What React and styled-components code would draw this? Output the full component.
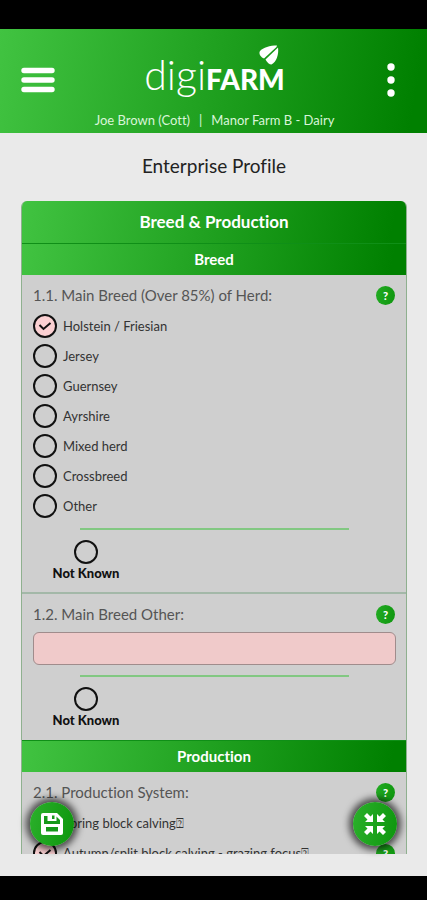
import React, { useState } from 'react';
import styled, { createGlobalStyle } from 'styled-components';

const green = 'linear-gradient(100deg, #41c341 0%, #008000 96%)';

const GlobalStyle = createGlobalStyle`
  * {
    box-sizing: border-box;
  }
  body {
    margin: 0;
    background: #000;
    font-family: Lato, "DejaVu Sans", sans-serif;
    font-variant-ligatures: none;
  }
  button, input {
    font-family: inherit;
  }
`;

const Screen = styled.div`
  display: flex;
  flex-direction: column;
  height: 100vh;
  padding: 29px 0 24px;
  background: #000;
`;

const Header = styled.header`
  flex: none;
  display: grid;
  grid-template-columns: 40px 1fr 40px;
  align-items: center;
  height: 104px;
  padding: 0 16px 2px 18px;
  background: ${green};
  color: #fff;
`;

const IconButton = styled.button`
  display: grid;
  place-items: center;
  height: 40px;
  padding: 0;
  border: 0;
  background: none;
  color: #fff;
`;

const Brand = styled.div`
  display: flex;
  flex-direction: column;
  align-items: center;
  padding-top: 10px;
`;

const Logo = styled.div`
  position: relative;
  display: flex;
  align-items: baseline;
  height: 64px;
  line-height: 64px;
`;

const LogoLight = styled.span`
  font-size: 41px;
  font-weight: 300;
`;

const LogoBold = styled.span`
  font-size: 28px;
  font-weight: 900;
`;

const Leaf = styled.svg`
  position: absolute;
  top: 2px;
  right: 6px;
`;

const UserLine = styled.div`
  display: flex;
  gap: 9px;
  font-size: 13px;
  line-height: 16px;
  margin-top: 5px;
  color: #d9f5d9;
  white-space: nowrap;
`;

const Main = styled.main`
  position: relative;
  flex: 1;
  min-height: 0;
  display: flex;
  flex-direction: column;
  padding: 0 20px 22px 21px;
  background: #eaeaea;
`;

const PageTitle = styled.h1`
  flex: none;
  margin: 0;
  padding: 21px 0 23px;
  font-size: 19px;
  font-weight: 400;
  line-height: 24px;
  text-align: center;
  color: #222;
`;

const Scroller = styled.div`
  flex: 1;
  min-height: 0;
  overflow-y: auto;
  scrollbar-width: none;
`;

const Card = styled.div`
  border: 1px solid #8fb08f;
  border-top: 0;
  border-radius: 6px 6px 0 0;
  overflow: hidden;
  background: #cfcfcf;
`;

const CardTitle = styled.h2`
  margin: 0;
  font-size: 17px;
  font-weight: 700;
  line-height: 42px;
  text-align: center;
  color: #fff;
  background: ${green};
`;

const SectionTitle = styled.h3`
  margin: 0;
  border-top: 1px solid #0f8f17;
  font-size: 15px;
  font-weight: 700;
  line-height: 31px;
  text-align: center;
  color: #fff;
  background: ${green};
`;

const Question = styled.section`
  padding: 10px 10px 11px 11px;

  & + & {
    padding-bottom: 12px;
    border-top: 2px solid #a3b8a8;
  }
`;

const QuestionHead = styled.div`
  display: flex;
  align-items: center;
  justify-content: space-between;
  height: 20px;
  margin-bottom: 6px;
  padding-right: 1px;
  font-size: 15px;
  color: #555;
`;

const Help = styled.button`
  flex: none;
  width: 19px;
  height: 19px;
  padding: 0;
  border: 0;
  border-radius: 50%;
  font-size: 11px;
  font-weight: 900;
  line-height: 19px;
  text-align: center;
  color: #fff;
  background: linear-gradient(100deg, #23ab23, #0f960f);
`;

const OptionRow = styled.div`
  display: flex;
  align-items: center;
  justify-content: space-between;
  height: 30px;
  padding-right: 1px;
`;

const OptionLabel = styled.label`
  display: flex;
  align-items: center;
  gap: 6px;
  font-size: 13px;
  line-height: 16px;
  white-space: nowrap;
  color: #333;
`;

const Mark = styled.span`
  display: grid;
  width: 24px;
  height: 24px;

  & > * {
    grid-area: 1 / 1;
  }
`;

const Dot = styled.input`
  appearance: none;
  width: 24px;
  height: 24px;
  margin: 0;
  border: 2px solid #111;
  border-radius: 50%;

  &:checked {
    background: #fbd0d2;
  }
`;

const Tick = styled.svg`
  place-self: center;
  pointer-events: none;
`;

const Rule = styled.hr`
  width: 74%;
  height: 2px;
  margin: 7px auto 10px;
  border: 0;
  background: #82c882;
`;

const NotKnownLabel = styled.label`
  display: flex;
  flex-direction: column;
  align-items: center;
  gap: 1px;
  width: 106px;
  font-size: 13px;
  font-weight: 900;
  line-height: 16px;
  color: #111;
`;

const TextBox = styled.input`
  display: block;
  width: 100%;
  height: 33px;
  margin: 8px 0 10px;
  padding: 0 8px;
  border: 1px solid #a08c8c;
  border-radius: 6px;
  background: #f0caca;
`;

const Fab = styled.button`
  position: absolute;
  bottom: 30px;
  ${(props) => props.$side}: 30px;
  display: grid;
  place-items: center;
  width: 44px;
  height: 44px;
  padding: 0;
  border: 0;
  border-radius: 50%;
  color: #fff;
  background: linear-gradient(100deg, #2bb02b, #0d960d);
  box-shadow: 0 0 7px 4px rgba(0, 0, 0, 0.65);
`;

const breeds = ['Holstein / Friesian', 'Jersey', 'Guernsey', 'Ayrshire', 'Mixed herd', 'Crossbreed', 'Other'];
const systems = ['Spring block calving⍰', 'Autumn/split block calving - grazing focus⍰'];

const Choice = ({ type, name, checked, onChange }) => (
  <Mark>
    <Dot type={type} name={name} checked={checked} onChange={onChange} />
    {checked && (
      <Tick width="14" height="10" viewBox="0 0 14 10" fill="none" stroke="#111" strokeWidth="2">
        <path d="M1.500 4 5.500 8 12.500 2" />
      </Tick>
    )}
  </Mark>
);

const NotKnown = ({ name }) => {
  const [on, setOn] = useState(false);
  return (
    <>
      <Rule />
      <NotKnownLabel>
        <Choice type="checkbox" name={name} checked={on} onChange={() => setOn(!on)} />
        Not Known
      </NotKnownLabel>
    </>
  );
};

const App = () => {
  const [breed, setBreed] = useState(breeds[0]);
  const [system, setSystem] = useState(systems[1]);

  return (
    <>
      <GlobalStyle />
      <Screen>
        <Header>
          <IconButton aria-label="Menu">
            <svg width="34" height="26" viewBox="0 0 34 26" stroke="#fff" strokeWidth="5.4" strokeLinecap="round">
              <path d="M3 3.5H31M3 13H31M3 22.5H31" />
            </svg>
          </IconButton>
          <Brand>
            <Logo>
              <LogoLight>digi</LogoLight>
              <LogoBold>FARM</LogoBold>
              <Leaf width="20" height="20" viewBox="0 0 20 20" fill="#fff">
                <path d="M18 0.5C11 0.5 4 2.5 1 6C-0.5 8.5 1 12 5 13.5L17.5 2Z" />
                <path d="M19 2.5L6.5 14.500C8 17.500 10.500 19.500 12.500 19.500C17.500 17 20 9 19 2.500Z" />
              </Leaf>
            </Logo>
            <UserLine>
              <span>Joe Brown (Cott)</span>
              <span>|</span>
              <span>Manor Farm B - Dairy</span>
            </UserLine>
          </Brand>
          <IconButton aria-label="More">
            <svg width="8" height="34" viewBox="0 0 8 34" fill="#fff">
              <circle cx="4" cy="4" r="3.700" />
              <circle cx="4" cy="17" r="3.700" />
              <circle cx="4" cy="30" r="3.700" />
            </svg>
          </IconButton>
        </Header>

        <Main>
          <PageTitle>Enterprise Profile</PageTitle>
          <Scroller>
            <Card>
              <CardTitle>Breed &amp; Production</CardTitle>
              <SectionTitle>Breed</SectionTitle>
              <Question>
                <QuestionHead>
                  1.1. Main Breed (Over 85%) of Herd:
                  <Help>?</Help>
                </QuestionHead>
                {breeds.map((b) => (
                  <OptionRow key={b}>
                    <OptionLabel>
                      <Choice type="radio" name="breed" checked={breed === b} onChange={() => setBreed(b)} />
                      {b}
                    </OptionLabel>
                  </OptionRow>
                ))}
                <NotKnown name="breedNotKnown" />
              </Question>
              <Question>
                <QuestionHead>
                  <label htmlFor="breedOther">1.2. Main Breed Other:</label>
                  <Help>?</Help>
                </QuestionHead>
                <TextBox id="breedOther" type="text" />
                <NotKnown name="otherNotKnown" />
              </Question>
              <SectionTitle>Production</SectionTitle>
              <Question>
                <QuestionHead>
                  2.1. Production System:
                  <Help>?</Help>
                </QuestionHead>
                {systems.map((s) => (
                  <OptionRow key={s}>
                    <OptionLabel>
                      <Choice type="radio" name="system" checked={system === s} onChange={() => setSystem(s)} />
                      {s}
                    </OptionLabel>
                    <Help>?</Help>
                  </OptionRow>
                ))}
              </Question>
            </Card>
          </Scroller>
          <Fab $side="left" aria-label="Save">
            <svg width="22" height="22" viewBox="0 0 22 22">
              <path d="M2 0H16L22 6V20A2 2 0 0 1 20 22H2A2 2 0 0 1 0 20V2A2 2 0 0 1 2 0Z" fill="#fff" />
              <path d="M3 3H6.500V8H15.500V3.500L19 7V11H3Z" fill="#16981a" />
              <path d="M11 2.500H13.500V6H11Z" fill="#16981a" />
              <path d="M5 14H17V18.500H5Z" fill="#16981a" />
            </svg>
          </Fab>
          <Fab $side="right" aria-label="Collapse">
            <svg width="22" height="22" viewBox="0 0 22 22" fill="#fff">
              <path d="M9 9H1L3.500 6.500L0 3L3 0L6.500 3.500L9 1Z" />
              <path d="M13 9V1L15.500 3.500L19 0L22 3L18.500 6.500L21 9Z" />
              <path d="M9 13V21L6.500 18.500L3 22L0 19L3.500 15.500L1 13Z" />
              <path d="M13 13H21L18.500 15.500L22 19L19 22L15.500 18.500L13 21Z" />
            </svg>
          </Fab>
        </Main>
      </Screen>
    </>
  );
};

export default App;
